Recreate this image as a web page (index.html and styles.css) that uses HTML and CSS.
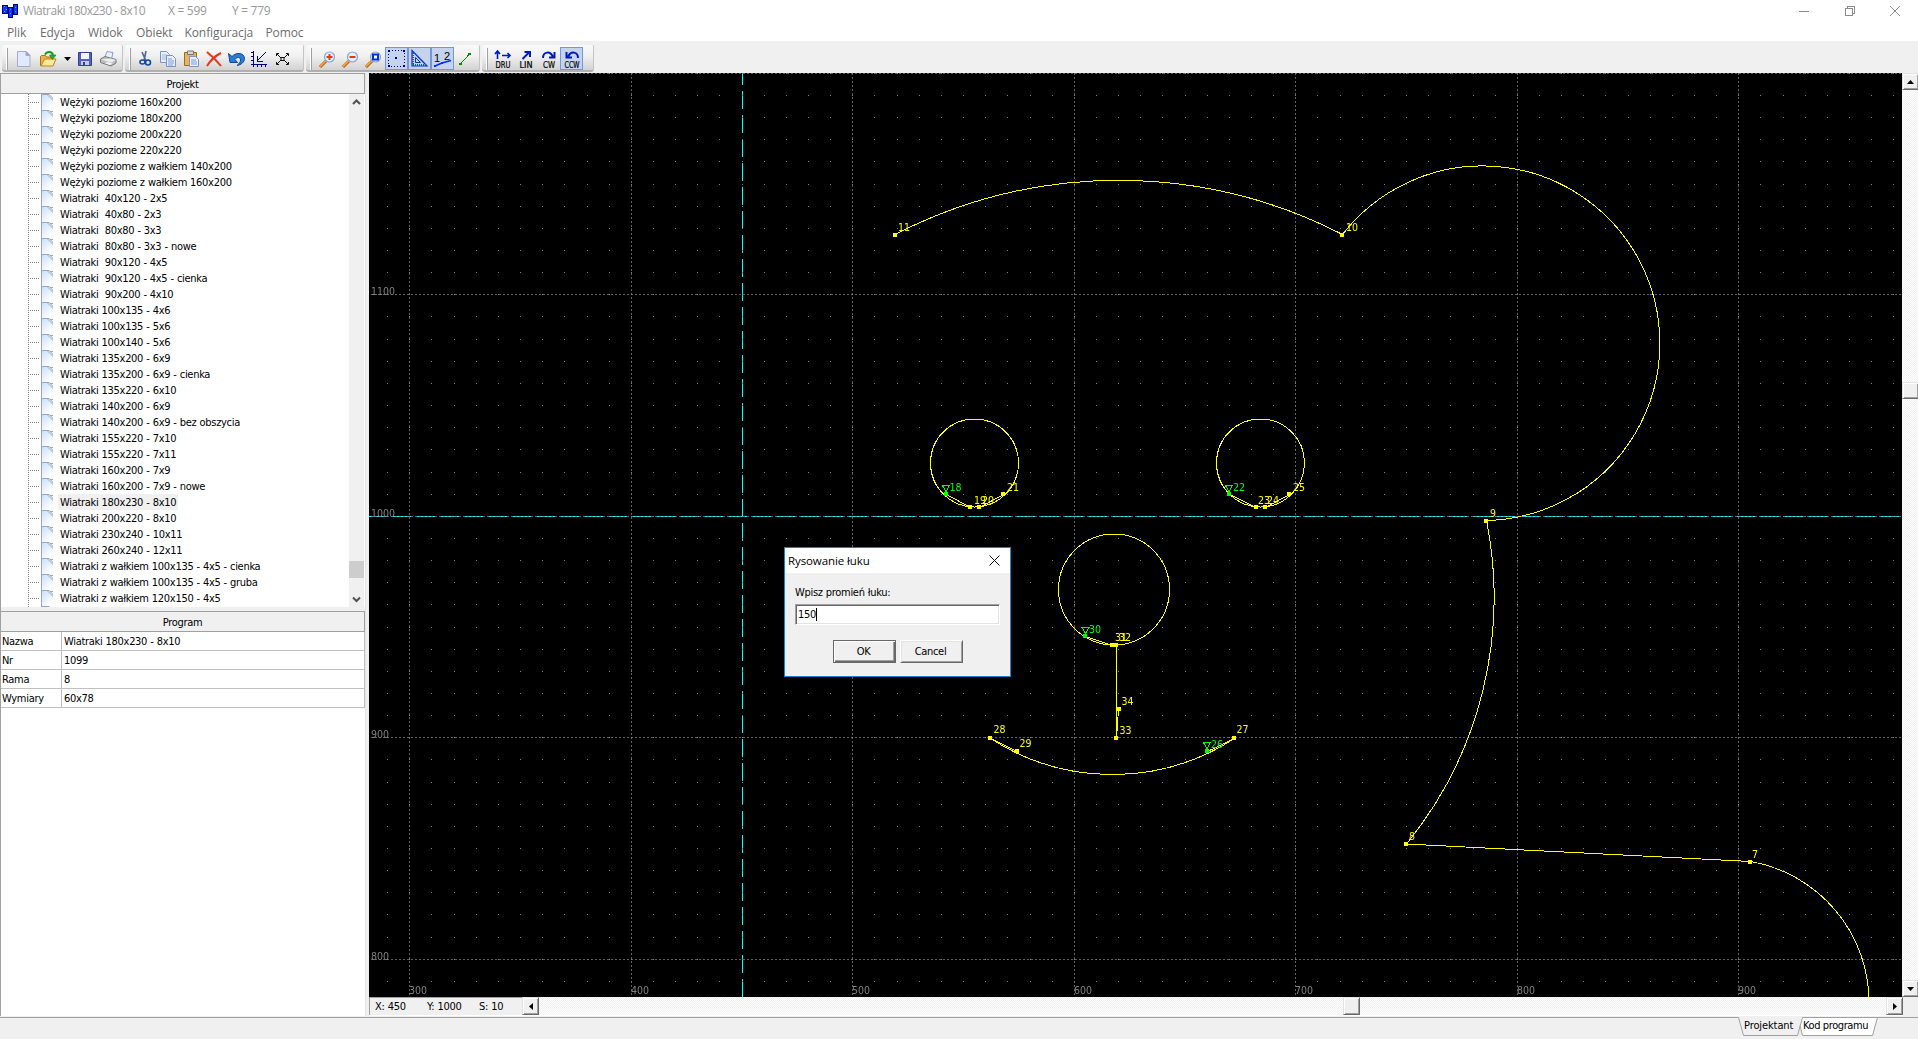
FILE: index.html
```html
<!DOCTYPE html>
<html lang="pl">
<head>
<meta charset="utf-8">
<title>Wiatraki 180x230 - 8x10</title>
<link rel="stylesheet" href="styles.css">
</head>
<body>
<div class="app">
  <header class="titlebar">
    <svg class="appicon" width="16" height="16" viewBox="0 0 16 16" shape-rendering="crispEdges"><path fill="#000080" d="M0 2h6v9H0zM6 4h5v11H6zM11 1h5v11h-5z"/><path fill="#0a3cff" d="M1 3h4v7H1zM7 5h3v9H7zM12 2h3v9h-3z"/><path fill="#35b8ff" d="M2 3h1v1H2zM4 6h1v1H4zM2 8h1v1H2zM8 6h1v1H8zM13 4h1v1h-1zM13 8h1v1h-1zM8 10h1v1H8z"/></svg>
    <span class="t1">Wiatraki 180x230 - 8x10</span><span class="t2">X = 599</span><span class="t3">Y = 779</span>
    <div class="winbtns">
      <svg width="10" height="12" viewBox="0 0 10 12" shape-rendering="crispEdges"><path d="M0 6h10v1H0z" fill="#8c8c8c"/></svg>
      <svg width="10" height="12" viewBox="0 0 10 12" shape-rendering="crispEdges" fill="none" stroke="#8c8c8c"><path d="M.5 3.5h7v7h-7zM2.500 3V1.500h7v7H8"/></svg>
      <svg width="10" height="12" viewBox="0 0 10 12" fill="none" stroke="#8c8c8c"><path d="M0 1l10 10M10 1L0 11"/></svg>
    </div>
  </header>
  <nav class="menu"><span class="m1">Plik</span><span class="m2">Edycja</span><span class="m3">Widok</span><span class="m4">Obiekt</span><span class="m5">Konfiguracja</span><span class="m6">Pomoc</span></nav>

  <div class="toolbars">
    <div class="tb g1"><i class="grip"></i>
      <svg width="14" height="16" viewBox="0 0 14 16"><path d="M.5.5h8.500l4 4v11H.5z" fill="#dfeafc" stroke="#a3abc9"/><path d="M9 .5v4h4z" fill="#8fa2c8" stroke="#a3abc9"/></svg>
      <svg class="open" width="17" height="16" viewBox="0 0 17 16"><path d="M.5 14.500v-9l1-1h4l1 1.500h6v8.500z" fill="#e8b64c" stroke="#a87414"/><path d="M1 15l3.500-7H16l-3 7z" fill="#ffe89a" stroke="#b78620"/><path d="M5 3.500C7 0 12 0 13 4" fill="none" stroke="#169a22" stroke-width="2"/><path d="M9.500 4H16l-3.500 4.500z" fill="#26b430" stroke="#0c7a18" stroke-width=".6"/></svg>
      <svg class="drop" width="7" height="16" viewBox="0 0 7 16"><path d="M0 6h7L3.500 10z"/></svg>
      <svg class="save" width="14" height="16" viewBox="0 0 14 16"><path d="M.5 1.500h13v13H.5z" fill="#5660c0" stroke="#34408f"/><path d="M3 2h8v6H3z" fill="#f4f6ff"/><path d="M3 10h8v4H3z" fill="#c4cbee"/><path d="M5 11h2v3H5z" fill="#34408f"/></svg>
      <svg class="print" width="17" height="16" viewBox="0 0 17 16"><path d="M5 6l2-5.500 6 1L11.500 8z" fill="#e8f3ff" stroke="#7e9ed0"/><path d="M.5 8L5 5.500l11 3v3.500L11 15 .5 11.500z" fill="#bfbfc3" stroke="#77777c"/><path d="M1 8.500l10 3 5-2.500-5-1.500z" fill="#ececee"/><path d="M5 12.500l5 1.500 2.500-1.500-5-1.500z" fill="#f4f4f6"/></svg>
    </div>
    <div class="tb g2"><i class="grip"></i>
      <svg class="cut" width="13" height="16" viewBox="0 0 13 16" fill="none"><path d="M3 1l4 9M7 0L5 10" stroke="#4c6890" stroke-width="1.600"/><ellipse cx="3.500" cy="11" rx="2.500" ry="2" stroke="#1446a8" stroke-width="1.600"/><ellipse cx="9" cy="11.500" rx="2.500" ry="2.500" stroke="#1446a8" stroke-width="1.600"/></svg>
      <svg class="copy" width="16" height="16" viewBox="0 0 16 16" fill="#e8f0ff" stroke="#7f90c4"><path d="M.5.5h6l3 3v8h-9z"/><path d="M2 4h5M2 6h5M2 8h5" stroke="#9fb4e6"/><path d="M6.500 4.500h6l3 3v8h-9z"/><path d="M8 8h4M8 10h6M8 12h6M8 14h5" stroke="#7c9ad8"/></svg>
      <svg class="paste" width="15" height="16" viewBox="0 0 15 16"><path d="M.5 1.500h12v13H.5z" fill="#e6b65a" stroke="#9a6d1c"/><path d="M3.500 0h6v3.500h-6z" fill="#d8d8dc" stroke="#777"/><path d="M5.500 5.500h6l3 3v7h-9z" fill="#e8f0ff" stroke="#7f90c4"/><path d="M7 9h5M7 11h6M7 13h6" stroke="#7c9ad8"/></svg>
      <svg class="del" width="16" height="16" viewBox="0 0 16 16" fill="none" stroke="#e53517" stroke-width="2"><path d="M1 1c5 4 10 9 14 14M15 2C9 5 4 10 1 15"/></svg>
      <svg class="undo" width="17" height="16" viewBox="0 0 17 16"><path d="M.5 2.500L2 11.500h7.500L7 8.500C9 5.500 12.500 6 12.500 9c0 2-1.500 4-3.500 5.500C13 14 16.500 11 16.500 7.500 16.500 2 8.500.5 4 5.500z" fill="#2a7ad8" stroke="#0d4796"/></svg>
      <svg class="axis" width="16" height="16" viewBox="0 0 16 16" fill="none" stroke="#000090"><path d="M2.500 0v13.500H16M0 1.500h2M0 5.500h2M0 9.500h2M0 13.500h2M2.500 14v2M6.500 14v2M10.500 14v2M14.500 14v2M14.500 1.500L6.500 9.500M6.500 5v5h5" shape-rendering="crispEdges"/></svg>
      <svg class="fit" width="13" height="16" viewBox="0 0 13 16" fill="none" stroke="#111"><path d="M.5 5V2.500H3M10 2.500h2.500V5M.5 11v2.500H3M10 13.500h2.500V11M1 3l4 4M12 3L8 7M1 13l4-4M12 13L8 9M5 6.500h3v3H5z"/></svg>
    </div>
    <div class="tb g3"><i class="grip"></i>
      <svg width="17" height="17" viewBox="0 0 17 17"><path d="M1 16l6-6" stroke="#a05a14" stroke-width="3"/><path d="M1 15.500l6-6" stroke="#f2a040" stroke-width="1.800"/><circle cx="10.500" cy="6" r="5" fill="#dff2ff" stroke="#86a9d4" stroke-width="1.200"/><path d="M7.500 6h6M10.500 3v6" stroke="#e83818" stroke-width="2"/></svg>
      <svg width="17" height="17" viewBox="0 0 17 17"><path d="M1 16l6-6" stroke="#a05a14" stroke-width="3"/><path d="M1 15.500l6-6" stroke="#f2a040" stroke-width="1.800"/><circle cx="10.500" cy="6" r="5" fill="#dff2ff" stroke="#86a9d4" stroke-width="1.200"/><path d="M7.500 6h6" stroke="#e83818" stroke-width="2"/></svg>
      <svg width="17" height="17" viewBox="0 0 17 17"><path d="M1 16l6-6" stroke="#a05a14" stroke-width="3"/><path d="M1 15.500l6-6" stroke="#f2a040" stroke-width="1.800"/><circle cx="10.500" cy="6" r="5" fill="#dff2ff" stroke="#86a9d4" stroke-width="1.200"/><path d="M8 3.500h5v5H8z" fill="#fff" stroke="#0030e8" stroke-width="2"/></svg>
      <b class="on"><svg width="17" height="17" viewBox="0 0 17 17" shape-rendering="crispEdges"><path d="M.5.5h16v16H.5z" fill="none" stroke="#000090" stroke-dasharray="1 2"/><path d="M0 0h2v2H0zM15 0h2v2h-2zM0 15h2v2H0zM15 15h2v2h-2zM7 7h2v2H7z" fill="#000090"/></svg></b>
      <b class="on"><svg width="17" height="17" viewBox="0 0 17 17" fill="none"><path d="M1 .5v15.500h15z" stroke="#0030d0" stroke-width="1.200"/><path d="M4.500 7.500v5h5z" stroke="#004090" /><path d="M2 3v12h13" stroke="#006a90" stroke-width="2" stroke-dasharray="1 1"/></svg></b>
      <b class="on"><svg width="18" height="18" viewBox="0 0 18 18"><text x="0" y="12" class="num">1</text><text x="10" y="10" class="num">2</text><path d="M1 16l7-3 9-2.500" fill="none" stroke="#0030ff" stroke-width="1.500"/><path d="M0 15h2v2H0zM7 12h2v2H7z" fill="#0030ff"/></svg></b>
      <svg class="seg" width="12" height="14" viewBox="0 0 12 14" shape-rendering="crispEdges"><path d="M1 12.500L11 1.500" stroke="#008a00"/><path d="M0 11h3v2H0zM9 1h3v2H9z" fill="#008a00"/></svg>
    </div>
    <div class="tb g4"><i class="grip"></i>
      <b><svg width="18" height="20" viewBox="0 0 18 20"><path d="M3.500 9V1M1 4l2.500-3L6 4M8 5.500h8M13.500 3L16 5.500 13.500 8" fill="none" stroke="#0018c0" stroke-width="1.600"/><text x="9" y="17.500" class="cap" textLength="15" lengthAdjust="spacingAndGlyphs">DRU</text></svg></b>
      <b><svg width="18" height="20" viewBox="0 0 18 20"><path d="M5.500 9L12 2.500M7.500 2H13v5" fill="none" stroke="#0018c0" stroke-width="2"/><text x="9" y="17.500" class="cap" textLength="13" lengthAdjust="spacingAndGlyphs">LIN</text></svg></b>
      <b><svg width="18" height="20" viewBox="0 0 18 20"><path d="M3 8C3 2 10 0 13 7M14.500 2v5.500H9" fill="none" stroke="#0018c0" stroke-width="2"/><text x="9" y="17.500" class="cap" textLength="12" lengthAdjust="spacingAndGlyphs">CW</text></svg></b>
      <b class="on ccw"><svg width="18" height="20" viewBox="0 0 18 20"><path d="M15 8C15 2 8 0 5 7M3.500 2v5.500H9" fill="none" stroke="#0018c0" stroke-width="2"/><text x="9" y="17.500" class="cap" textLength="15" lengthAdjust="spacingAndGlyphs">CCW</text></svg></b>
    </div>
  </div>

  <main class="work">
    <aside class="side">
      <div class="hdr">Projekt</div>
      <div class="treebox">
        <ul class="tree">
          <li>Wężyki poziome 160x200</li><li>Wężyki poziome 180x200</li><li>Wężyki poziome 200x220</li><li>Wężyki poziome 220x220</li>
          <li>Wężyki poziome z wałkiem 140x200</li><li>Wężyki poziome z wałkiem 160x200</li>
          <li>Wiatraki  40x120 - 2x5</li><li>Wiatraki  40x80 - 2x3</li><li>Wiatraki  80x80 - 3x3</li><li>Wiatraki  80x80 - 3x3 - nowe</li>
          <li>Wiatraki  90x120 - 4x5</li><li>Wiatraki  90x120 - 4x5 - cienka</li><li>Wiatraki  90x200 - 4x10</li>
          <li>Wiatraki 100x135 - 4x6</li><li>Wiatraki 100x135 - 5x6</li><li>Wiatraki 100x140 - 5x6</li>
          <li>Wiatraki 135x200 - 6x9</li><li>Wiatraki 135x200 - 6x9 - cienka</li><li>Wiatraki 135x220 - 6x10</li>
          <li>Wiatraki 140x200 - 6x9</li><li>Wiatraki 140x200 - 6x9 - bez obszycia</li>
          <li>Wiatraki 155x220 - 7x10</li><li>Wiatraki 155x220 - 7x11</li><li>Wiatraki 160x200 - 7x9</li><li>Wiatraki 160x200 - 7x9 - nowe</li>
          <li><span class="sel">Wiatraki 180x230 - 8x10</span></li><li>Wiatraki 200x220 - 8x10</li><li>Wiatraki 230x240 - 10x11</li><li>Wiatraki 260x240 - 12x11</li>
          <li>Wiatraki z wałkiem 100x135 - 4x5 - cienka</li><li>Wiatraki z wałkiem 100x135 - 4x5 - gruba</li><li>Wiatraki z wałkiem 120x150 - 4x5</li><li></li>
        </ul>
        <div class="tscroll">
          <svg width="9" height="16" viewBox="0 0 9 16"><path d="M1 10l3.500-3.500L8 10" fill="none" stroke="#505050" stroke-width="2"/></svg>
          <i></i>
          <svg width="9" height="16" viewBox="0 0 9 16"><path d="M1 6.500L4.500 10 8 6.500" fill="none" stroke="#505050" stroke-width="2"/></svg>
        </div>
      </div>
      <div class="split"></div>
      <div class="hdr">Program</div>
      <dl class="props"><dt>Nazwa</dt><dd>Wiatraki 180x230 - 8x10</dd><dt>Nr</dt><dd>1099</dd><dt>Rama</dt><dd>8</dd><dt>Wymiary</dt><dd>60x78</dd></dl>
    </aside>

    <section class="view">
      <svg class="cad" width="1533" height="924" viewBox="369 73 1533 924">
        <rect x="369" y="73" width="1533" height="924"/>
        <g id="grid" class="grid"></g>
        <path id="dots" class="dots"/>
        <g class="axislbl">
          <text x="371" y="295">1100</text><text x="371" y="517">1000</text><text x="371" y="738">900</text><text x="371" y="960">800</text>
          <text x="409" y="994">300</text><text x="631" y="994">400</text><text x="852" y="994">500</text><text x="1074" y="994">600</text><text x="1295" y="994">700</text><text x="1517" y="994">800</text><text x="1738" y="994">900</text>
        </g>
        <g class="curve">
          <path d="M895 234.500A489.500 489.500 0 0 1 1342.500 234.500A177.300 177.300 0 1 1 1486.500 520.500A391 391 0 0 1 1406.500 844L1750.500 861.500A143 143 0 0 1 1869 1003"/>
          <circle cx="974.500" cy="463" r="44"/><circle cx="1260.500" cy="463" r="44"/><circle cx="1114" cy="589.500" r="55.500"/>
          <path d="M946.500 494.500L970.500 507.500M979.500 507.500L1003.500 494.500M1229.500 494.500L1256.500 507.500M1265.500 507.500L1289.500 494.500M1085.500 636.500L1112.500 645.500"/>
          <path d="M1116.500 645.500V738.500L1118.500 709.500"/>
          <path d="M1017.500 751.500L990.500 738.500A224.700 224.700 0 0 0 1234.500 738.500L1207.500 751.500"/>
        </g>
        <g class="start"><path d="M942.500 485.500h7l-3.500 6zM1225.500 485.500h7l-3.500 6zM1082 627.500h7l-3.500 6zM1203.500 742.500h7l-3.500 6z"/></g>
        <path class="pt" d="M893 233h4v4h-4zM1340 233h4v4h-4zM1484 519h4v4h-4zM1404 842h4v4h-4zM1748 860h4v4h-4zM968 505h4v4h-4zM977 505h4v4h-4zM1001 492h4v4h-4zM1254 505h4v4h-4zM1263 505h4v4h-4zM1287 492h4v4h-4zM1110 643h8v4h-8zM1117 707h4v4h-4zM1114 736h4v4h-4zM988 736h4v4h-4zM1015 749h4v4h-4zM1232 736h4v4h-4z"/>
        <path class="pt gr" d="M944 492h4v4h-4zM1227 492h4v4h-4zM1083 634h4v4h-4zM1205 749h4v4h-4z"/>
        <g class="ylbl">
          <text x="898" y="231">11</text><text x="1346" y="231">10</text><text x="1490" y="517">9</text><text x="1409" y="840">8</text><text x="1752" y="858">7</text>
          <text x="974" y="504">19</text><text x="982" y="504">20</text><text x="1007" y="491">21</text><text x="1258" y="504">23</text><text x="1267" y="504">24</text><text x="1293" y="491">25</text>
          <text x="1115" y="641">31</text><text x="1119" y="641">32</text><text x="1121.500" y="705">34</text><text x="1119.500" y="734">33</text><text x="993.500" y="733">28</text><text x="1019.500" y="747">29</text><text x="1236.500" y="733">27</text>
        </g>
        <g class="glbl"><text x="949.500" y="491">18</text><text x="1233" y="491">22</text><text x="1089" y="633">30</text><text x="1211" y="748">26</text></g>
        <path class="cursor" d="M369 516.500H1902" stroke-dasharray="18 6"/>
        <path class="cursor" d="M742.500 73V997" stroke-dasharray="18 6" stroke-dashoffset="6"/>
      </svg>
      <div class="vscroll"><div class="sb"><svg width="7" height="4"><path d="M0 4h7L3.500 0z"/></svg></div><div class="sb thumb"></div><div class="sb"><svg width="7" height="4"><path d="M0 0h7L3.500 4z"/></svg></div></div>
      <div class="hrow">
        <div class="status"><span class="s1">X: 450</span><span class="s2">Y: 1000</span><span class="s3">S: 10</span></div>
        <div class="hscroll"><div class="sb"><svg width="4" height="7"><path d="M4 0v7L0 3.500z"/></svg></div><div class="sb thumb"></div><div class="sb"><svg width="4" height="7"><path d="M0 0v7l4-3.500z"/></svg></div></div>
      </div>
      <div class="corner"></div>
    </section>
  </main>

  <footer class="tabs">
    <svg class="tabline" width="1918" height="23" viewBox="0 0 1918 23"><path d="M1801.500 1.500H1877.500L1872.500 19.500H1804.500L1800.500 14.500z" fill="#fff"/><path d="M0 1.500H1738.500L1743.500 19.500H1797.500L1802.500 1.500H1918M1800 10L1802.500 19.500H1872.500L1877.500 1.500" fill="none" stroke="#a0a0a0"/></svg>
    <span class="tab">Projektant</span><span class="tab k">Kod programu</span>
  </footer>

  <div class="dialog" role="dialog">
    <div class="dtitle"><span>Rysowanie łuku</span><svg width="11" height="11" viewBox="0 0 11 11" stroke="#111"><path d="M.5.5l10 10M10.500.5l-10 10"/></svg></div>
    <div class="dbody">
      <div class="dlabel">Wpisz promień łuku:</div>
      <div class="field">150<i></i></div>
      <div class="btns"><span class="btn def">OK</span><span class="btn">Cancel</span></div>
    </div>
  </div>
</div>
<script src="grid.js"></script>
</body>
</html>
```
FILE: styles.css
```css
* { box-sizing: border-box; }
html { height: 1039px; overflow: hidden; }
body { margin: 0; height: 1039px; background: #f0f0f0; font: 11px/16px "DejaVu Sans Condensed", "DejaVu Sans", sans-serif; font-stretch: condensed; letter-spacing: -0.3px; word-spacing: 0.3px; color: #000; overflow: hidden; }
svg { display: block; flex: none; }
.app { position: relative; width: 1918px; height: 1039px; display: flex; flex-direction: column; }

.titlebar { height: 22px; background: #fff; display: flex; align-items: center; padding: 0 18px 0 2px; font: 12px/22px "Open Sans", sans-serif; letter-spacing: -0.5px; word-spacing: 0; color: #999; white-space: pre; }
.appicon { margin-right: 5px; }
.t1 { width: 145px; }
.t2 { width: 64px; }
.t2, .t3 { letter-spacing: -0.3px; }
.winbtns { margin-left: auto; display: flex; gap: 35.500px; }
.menu { height: 19px; background: #fff; display: flex; padding-left: 7px; font: 12px/21px "Open Sans", sans-serif; letter-spacing: -0.1px; color: #6d6d6d; }
.m1 { width: 33px; } .m2 { width: 48px; } .m3 { width: 48px; } .m4 { width: 48.500px; } .m5 { width: 81px; }

.toolbars { height: 32px; padding-top: 4px; display: flex; gap: 2px; }
.tb { height: 27px; display: flex; align-items: flex-start; background: linear-gradient(#fafafa, #f0f0f0 45%, #d2d2d2); border-right: 1px solid #c4c4c4; border-bottom: 2px solid #b0b0b0; border-radius: 2px 2px 3px 3px; padding: 6px 0 0 4px; }
.tb b { display: flex; justify-content: center; width: 23px; height: 23px; margin-top: -4px; padding-top: 3px; }
.tb .on { background: #c5d3ee; border: 1px solid #7397dc; padding-top: 2px; }
.tb svg { overflow: visible; }
.grip { width: 2px; height: 22px; margin-top: -3px; background: linear-gradient(90deg, #fff 50%, #a0a0a0 50%); }
.g1 { width: 121px; margin-left: 2px; } .g1 .grip { margin-right: 9px; }
.open { margin-left: 9px; } .drop { margin-left: 7px; } .save { margin-left: 7px; } .print { margin-left: 8px; }
.g2 { width: 179px; } .g2 .grip { margin-right: 8px; }
.copy { margin-left: 8px; } .paste { margin-left: 8px; } .del { margin-left: 7px; } .undo { margin-left: 6px; } .axis { margin-left: 6px; } .fit { margin-left: 9px; }
.g3 { width: 174px; } .g3 .grip { margin-right: 7px; } .g3 > svg + svg { margin-left: 6px; }
.g3 > b:first-of-type { margin-left: 3px; }
.g3 > .seg { margin: 1px 0 0 5px; }
.num { font: 11px "Liberation Sans", sans-serif; letter-spacing: 0; }
.g4 { width: 112px; } .g4 .grip { margin-right: 3px; }
.cap { font: 8px "DejaVu Sans", sans-serif; letter-spacing: 0; text-anchor: middle; stroke: #000; stroke-width: .2px; }

.work { display: flex; gap: 3px; height: 943px; }
.side { width: 366px; display: flex; flex-direction: column; background: #fff; border-left: 1px solid #a0a0a0; border-right: 1px solid #e4e4e4; }
.hdr { height: 21px; flex: none; border: 1px solid #a0a0a0; border-left: 0; background: #f0f0f0; text-align: center; line-height: 21px; }
.treebox { height: 513px; display: flex; overflow: hidden; }
.tree { flex: 1; margin: 0; padding: 0 0 0 27px; list-style: none; background: linear-gradient(#808080 50%, transparent 50%) 27px 0 / 1px 2px repeat-y; }
.tree li { position: relative; height: 16px; display: flex; line-height: 17px; padding-right: 4px; white-space: pre; }
.tree li::before { content: ""; width: 12px; height: 1px; margin: 8px 20px 0 0; background: repeating-linear-gradient(90deg, #808080 0 1px, transparent 1px 2px); }
.tree li::after { content: ""; position: absolute; left: 13px; top: 0; width: 12px; height: 16px; border: 1px solid #9aa3c6; clip-path: polygon(0 0, 8px 0, 12px 4px, 12px 100%, 0 100%); background: linear-gradient(225deg, #8492b4 0 3.500px, #c2cde4 3.500px 5px, transparent 5px), linear-gradient(135deg, #c8e0fa, #fff 75%); }
.tree li:last-child::before { visibility: hidden; }
.sel { background: #f0f0f0; margin-left: -2px; padding: 0 2px; }
.tscroll { width: 15px; background: #f0f0f0; display: flex; flex-direction: column; align-items: center; margin-right: 1px; }
.tscroll svg:last-child { margin-top: auto; }
.tscroll i { width: 15px; height: 17px; background: #cdcdcd; margin-top: 451px; }
.split { height: 4px; background: #f0f0f0; }
.props { margin: 0; display: grid; grid-template-columns: 61px 1fr; grid-auto-rows: 19px; border-right: 1px solid #c0c0c0; }
.props dt, .props dd { margin: 0; border-bottom: 1px solid #c0c0c0; padding-left: 1px; line-height: 19px; }
.props dt { border-right: 1px solid #c0c0c0; }
.props dd { padding-left: 2px; }

.view { flex: 1; display: grid; grid-template-columns: 1533px 16px; grid-template-rows: 924px 19px; }
.grid { fill: none; stroke: #606060; stroke-dasharray: 2 2; shape-rendering: crispEdges; }
.dots { fill: #808080; shape-rendering: crispEdges; }
.cad { isolation: isolate; }
.cad text { font-size: 10.500px; letter-spacing: 0; }
.axislbl { fill: #808080; }
.curve { fill: none; stroke: #ff0; shape-rendering: crispEdges; }
.start { fill: none; stroke: #0f0; shape-rendering: crispEdges; }
.pt { fill: #ff0; } .gr { fill: #0f0; }
.ylbl { fill: #ff0; } .glbl { fill: #0f0; }
.cursor { stroke: #0ff; mix-blend-mode: difference; shape-rendering: crispEdges; }
.vscroll, .hscroll { display: flex; background: repeating-conic-gradient(#fff 0 25%, #f0f0f0 0 50%) 0 0 / 2px 2px; }
.vscroll { flex-direction: column; }
.sb { width: 17px; height: 17px; flex: none; display: flex; align-items: center; justify-content: center; background: #f0f0f0; border: 1px solid; border-color: #e3e3e3 #696969 #696969 #e3e3e3; box-shadow: inset 1px 1px #fff, inset -1px -1px #a0a0a0; }
.vscroll .sb { width: 16px; border-right: 0; }
.vscroll .thumb { margin-top: 292px; }
.vscroll .sb:last-child { margin-top: auto; }
.hrow { display: flex; background: #fff; padding-bottom: 1px; width: 1534px; }
.status { width: 153px; background: #f0f0f0; border: solid #a0a0a0; border-width: 1px 0 0 1px; display: flex; padding-left: 5px; line-height: 17px; }
.s1 { width: 52px; } .s2 { width: 52px; }
.hscroll { flex: 1; }
.hscroll .sb { height: 18px; }
.hscroll .thumb { margin-left: 804px; }
.hscroll .sb:last-child { margin-left: auto; }

.tabs { height: 23px; position: relative; display: flex; padding: 1px 0 0 1744px; line-height: 17px; word-spacing: 0; }
.tabline { position: absolute; left: 0; top: 0; }
.tab { position: relative; width: 59px; letter-spacing: -0.1px; }
.tab.k { width: 72px; letter-spacing: -0.4px; }

.dialog { position: absolute; left: 784px; top: 547px; width: 227px; height: 130px; border: 1px solid #1883d7; background: #f0f0f0; }
.dtitle { height: 25px; background: #fff; display: flex; align-items: center; justify-content: space-between; padding: 0 10px 0 3px; font: 11.500px/24px "Open Sans", sans-serif; letter-spacing: -0.1px; word-spacing: 0; }
.dbody { padding: 12px 10px; }
.field { width: 205px; height: 21px; margin-top: 3px; background: #fff; border: 1px solid; border-color: #a0a0a0 #fff #fff #a0a0a0; box-shadow: inset 1px 1px #696969, inset -1px -1px #e3e3e3; padding-left: 2px; display: flex; line-height: 19px; }
.field i { width: 1px; height: 13px; background: #000; margin: 3px 0 0 0; }
.btns { display: flex; gap: 4px; margin: 15px 0 0 38px; }
.btn { width: 63px; height: 23px; text-align: center; line-height: 21px; padding-right: 2px; border: 1px solid; border-color: #fff #696969 #696969 #fff; box-shadow: inset 1px 1px #e3e3e3, inset -1px -1px #a0a0a0; }
.btn.def { border-color: #696969; box-shadow: inset 1px 1px #fff, inset -1px -1px #696969, inset -2px -2px #a0a0a0; }
```
FILE: grid.js
```js
// Grid of the drawing area: dots every 10 units, dotted lines every 100 units.
const STEP = 22.15, X0 = 387.15, Y0 = 72.8;
let dots = "", lines = "";
for (let j = 0; j < 42; j++) {
  const y = Math.round(Y0 + j * STEP);
  for (let i = 0; i < 69; i++) {
    const x = Math.round(X0 + i * STEP);
    if (x < 1902 && y < 997) dots += `M${x} ${y}h1v1h-1z`;
  }
}
for (let k = 0; k < 7; k++) lines += `<path d="M${Math.round(X0 + STEP * (1 + k * 10)) + 0.5} 73V997"/>`;
for (let k = 0; k < 5; k++) lines += `<path d="M371 ${Math.round(Y0 + STEP * k * 10) + 0.5}H1902"/>`;
document.getElementById("dots").setAttribute("d", dots);
document.getElementById("grid").innerHTML = lines;
```
